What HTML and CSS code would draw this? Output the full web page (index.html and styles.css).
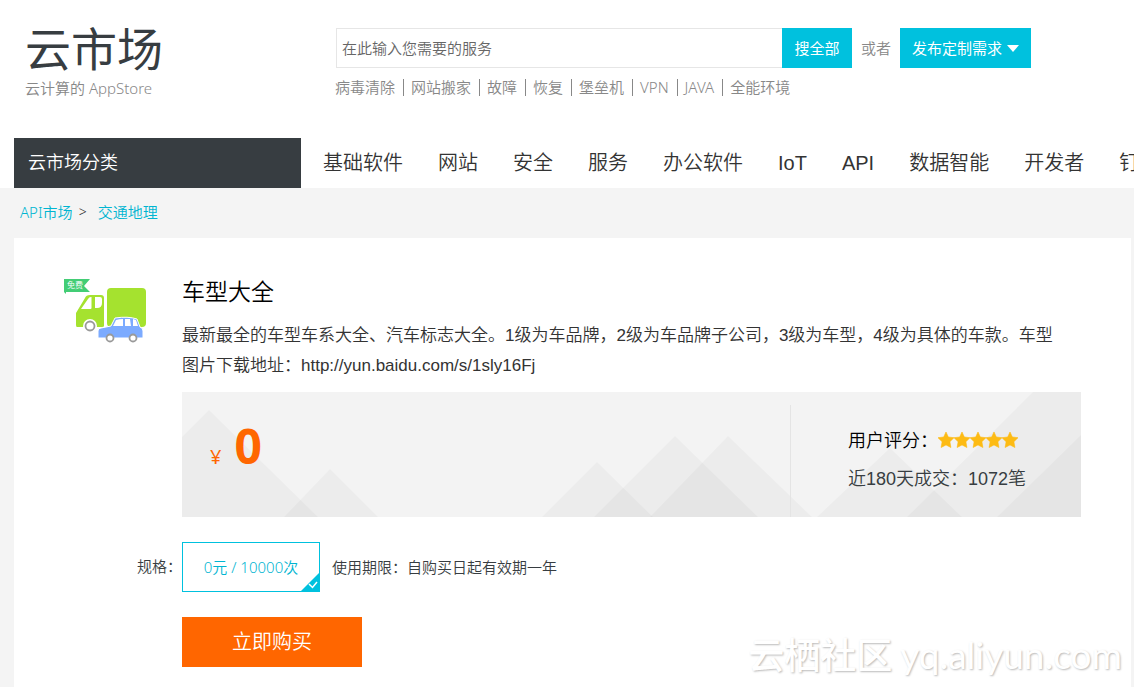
FILE: index.html
```html
<!DOCTYPE html>
<html lang="zh-CN">
<head>
<meta charset="utf-8">
<title>车型大全 - 云市场</title>
<link rel="stylesheet" href="styles.css">
</head>
<body>
<header class="header">
  <div class="brand">
    <div class="brand-name">云市场</div>
    <div class="brand-sub">云计算的 AppStore</div>
  </div>
  <div class="search">
    <form class="search-row">
      <input class="search-input" type="text" aria-label="搜索服务" placeholder="在此输入您需要的服务">
      <button class="btn-search" type="button">搜全部</button>
      <span class="or">或者</span>
      <button class="btn-custom" type="button">发布定制需求
        <svg class="caret" viewBox="0 0 12 7" aria-hidden="true"><path d="M0 0h12L6 7z" fill="#fff"/></svg>
      </button>
    </form>
    <ul class="hot">
      <li><a href="#">病毒清除</a></li><li><a href="#">网站搬家</a></li><li><a href="#">故障</a></li><li><a href="#">恢复</a></li><li><a href="#">堡垒机</a></li><li><a href="#">VPN</a></li><li><a href="#">JAVA</a></li><li><a href="#">全能环境</a></li>
    </ul>
  </div>
</header>
<nav class="nav">
  <a class="nav-all" href="#">云市场分类</a>
  <div class="nav-items">
    <a href="#">基础软件</a><a href="#">网站</a><a href="#">安全</a><a href="#">服务</a><a href="#">办公软件</a><a href="#">IoT</a><a href="#">API</a><a href="#">数据智能</a><a href="#">开发者</a><a href="#">钉钉</a>
  </div>
</nav>
<div class="crumbs"><a href="#">API市场</a><span class="crumb-sep">&gt;</span><a href="#">交通地理</a></div>
<main class="card">
  <div class="thumb">
    <svg class="thumb-art" viewBox="0 0 84 66" role="img" aria-label="卡车与汽车">
      <rect x="43" y="9" width="39" height="39" rx="4" fill="#a5e22f"/>
      <path d="M12 46V34l9-15q1-3 5-3h11q3 0 3 3v28q0 1-2 1H13q-1 0-1-2z" fill="#a5e22f"/>
      <path d="M17 30l7-10q1-2 3-2l.5 0v11q0 1-1 1zM31 18h5q2 0 2 2v4q0 5-5 5h-2z" fill="#fff"/>
      <circle cx="26" cy="47" r="7" fill="#fff"/>
      <circle cx="26" cy="47" r="4.5" fill="#fff" stroke="#999" stroke-width="1.8"/>
      <path d="M34 59v-7q0-3 3-3l10-2 4-8q13-2 22 1l3 8q3 1 3 4v7z" fill="#7cabff" stroke="#fff"/>
      <path d="M49 47l3-6q3-1 7-1v7zM61 40h5l1 7h-6zM69 40l3 1 2 6h-5z" fill="#fff"/>
      <circle cx="46" cy="59" r="3.5" fill="#fff" stroke="#999" stroke-width="1.8"/>
      <circle cx="69" cy="59" r="3.5" fill="#fff" stroke="#999" stroke-width="1.8"/>
      <path d="M0 0h26l-6 7 6 6H2v2L0 13z" fill="#43cd75"/>
      <text class="ribbon-text" x="3" y="9">免费</text>
    </svg>
  </div>
  <section class="info">
    <h1 class="title">车型大全</h1>
    <p class="desc">最新最全的车型车系大全、汽车标志大全。1级为车品牌，2级为车品牌子公司，3级为车型，4级为具体的车款。车型图片下载地址：http://yun.baidu.com/s/1sly16Fj</p>
    <div class="panel">
      <svg class="hills" viewBox="0 0 899 125" preserveAspectRatio="none" aria-hidden="true">
        <g fill="#000" fill-opacity=".027">
          <path d="M0 45L27 18 136 125H0z"/><path d="M102 125l46-48 48 48z"/>
          <path d="M360 125l55-55 56 55z"/><path d="M412 125l81-81 83 81z"/><path d="M468 125l78-81 84 81z"/>
          <path d="M635 125l73-69 72 69z"/><path d="M725 125L851 0h48v125z"/><path d="M815 125l84-82v82z"/>
        </g>
      </svg>
      <div class="price"><span class="yen">¥</span><strong class="amount">0</strong></div>
      <div class="stats">
        <div class="rating">用户评分：<svg class="stars" viewBox="0 0 80 16" role="img" aria-label="5星">
          <defs><path id="star" d="M8 0l2.300 5 5.700.7-4.100 4 1 5.800L8 12.900l-4.900 2.600 1-5.800L0 5.700 5.700 5z"/></defs>
          <g fill="#fdbb14" stroke="#fdbb14" stroke-width=".6"><use href="#star"/><use href="#star" x="16"/><use href="#star" x="32"/><use href="#star" x="48"/><use href="#star" x="64"/></g>
        </svg></div>
        <div class="deals">近180天成交：1072笔</div>
      </div>
    </div>
  </section>
  <div class="spec-label">规格：</div>
  <div class="spec">
    <label class="option"><input class="option-input" type="radio" name="spec" checked>0元 / 10000次
      <svg class="tick" viewBox="0 0 18 18" aria-hidden="true"><path d="M18 0v18H0z" fill="#00c1de"/><path d="M8 11l3.500 3.500L16 9" fill="none" stroke="#fff" stroke-width="1.500"/></svg>
    </label>
    <span>使用期限：自购买日起有效期一年</span>
  </div>
  <button class="btn-buy" type="button">立即购买</button>
  <div class="watermark"><span class="wm-cn">云栖社区</span><span class="wm-en">yq.aliyun.com</span></div>
</main>
</body>
</html>
```
FILE: styles.css
```css
* { box-sizing: border-box; }
body {
  margin: 0;
  background: #f4f4f4;
  color: #373d41;
  font: 350 15px/20px "Noto Sans", "Noto Sans CJK SC", sans-serif;
  overflow: hidden;
}
a { color: inherit; text-decoration: none; }
button { border: 0; font: inherit; color: #fff; cursor: pointer; }

.header { display: flex; height: 138px; background: #fff; }
.brand { width: 335px; padding: 20px 0 0 25px; }
.brand-name { margin-bottom: 2px; font-size: 46px; line-height: 56px; font-weight: 400; }
.brand-sub { color: #888; font-size: 15px; }
.search { padding-top: 28px; }
.search-row { display: flex; align-items: center; height: 40px; padding-left: 1px; }
.search-input {
  width: 446px; height: 40px; padding: 0 5px;
  border: 1px solid #e6e6e6; border-right: 0; border-radius: 0;
  font: inherit; color: #373d41; outline: 0;
}
.search-input::placeholder { color: #666; opacity: 1; }
.btn-search { width: 70px; height: 40px; padding: 0; background: #00c1de; font-weight: 400; }
.or { width: 48px; text-align: center; color: #888; }
.btn-custom {
  display: flex; align-items: center; gap: 5px;
  height: 40px; padding: 0 12px; background: #00c1de; font-weight: 400;
}
.caret { width: 12px; height: 7px; }
.hot { display: flex; margin: 11px 0 0; padding: 0; list-style: none; color: #888; line-height: 17px; }
.hot li { padding-right: 8px; margin-right: 7px; border-right: 1px solid #888; }
.hot li:last-child { border: 0; }

.nav { display: flex; height: 50px; padding-left: 14px; background: #fff; overflow: hidden; }
.nav-all {
  flex: none; width: 287px; padding-left: 14px;
  background: #373d41; color: #fff; font-size: 18px; line-height: 48px;
}
.nav-items {
  display: flex; gap: 35px; padding-left: 22px; white-space: nowrap; color: #333;
  font-family: "Liberation Sans", "Noto Sans CJK SC", sans-serif; font-size: 20px; line-height: 50px;
}
.crumbs { display: flex; height: 50px; padding-left: 20px; line-height: 48px; color: #00b5d1; }
.crumb-sep { width: 25px; padding-left: 6px; color: #333; font-size: 14px; }

.card {
  position: relative;
  display: grid; grid-template-columns: 168px 1fr; row-gap: 25px; align-content: start;
  min-height: 480px; margin: 0 3px 0 14px; padding: 36px 50px 20px 0;
  background: #fff;
}
.thumb { padding: 5px 0 0 50px; }
.thumb-art { display: block; width: 84px; height: 66px; }
.ribbon-text { font-size: 8px; fill: #fff; }
.title { margin: 0; color: #000; font-size: 23px; line-height: 34px; font-weight: 350; }
.desc {
  margin: 13px 0 11px; padding-right: 20px; color: #333;
  font-family: "Liberation Sans", "Noto Sans CJK SC", sans-serif; font-size: 17px; line-height: 30px;
}
.panel { position: relative; display: flex; justify-content: space-between; height: 125px; background: #f3f3f3; }
.hills { position: absolute; inset: 0; width: 100%; height: 100%; }
.price { position: relative; display: flex; align-items: baseline; gap: 13px; padding: 22px 0 0 28px; color: #ff6600; }
.yen { font-size: 20px; font-weight: 400; }
.amount { font: 700 48px/64px "Open Sans", sans-serif; }
.stats {
  position: relative; width: 291px; margin-top: 13px; padding: 17px 0 0 57px;
  border-left: 1px solid #e4e4e4;
  font-family: "Liberation Sans", "Noto Sans CJK SC", sans-serif; font-size: 18px; line-height: 38px;
}
.rating { display: flex; align-items: center; color: #000; }
.stars { width: 80px; height: 16px; margin-bottom: 2px; overflow: visible; }

.spec-label { line-height: 48px; text-align: right; }
.spec { display: flex; align-items: center; gap: 12px; }
.option {
  position: relative; width: 138px; height: 50px;
  border: 1px solid #00c1de; color: #00b5d1; line-height: 48px; text-align: center;
}
.option-input { position: absolute; opacity: 0; margin: 0; }
.tick { position: absolute; right: 0; bottom: 0; width: 18px; height: 18px; }
.btn-buy { grid-column: 2; width: 180px; height: 50px; padding: 0; background: #ff6600; font-size: 20px; }

.watermark {
  position: absolute; right: 9px; bottom: 38px;
  display: flex; align-items: baseline; gap: 8px; height: 50px;
  color: #fff; line-height: 50px; text-shadow: 1px 1px 2px #bbb; white-space: nowrap;
}
.wm-cn { font-size: 36px; font-weight: 500; }
.wm-en { font-family: Lato, sans-serif; font-size: 37px; font-weight: 400; }
```
